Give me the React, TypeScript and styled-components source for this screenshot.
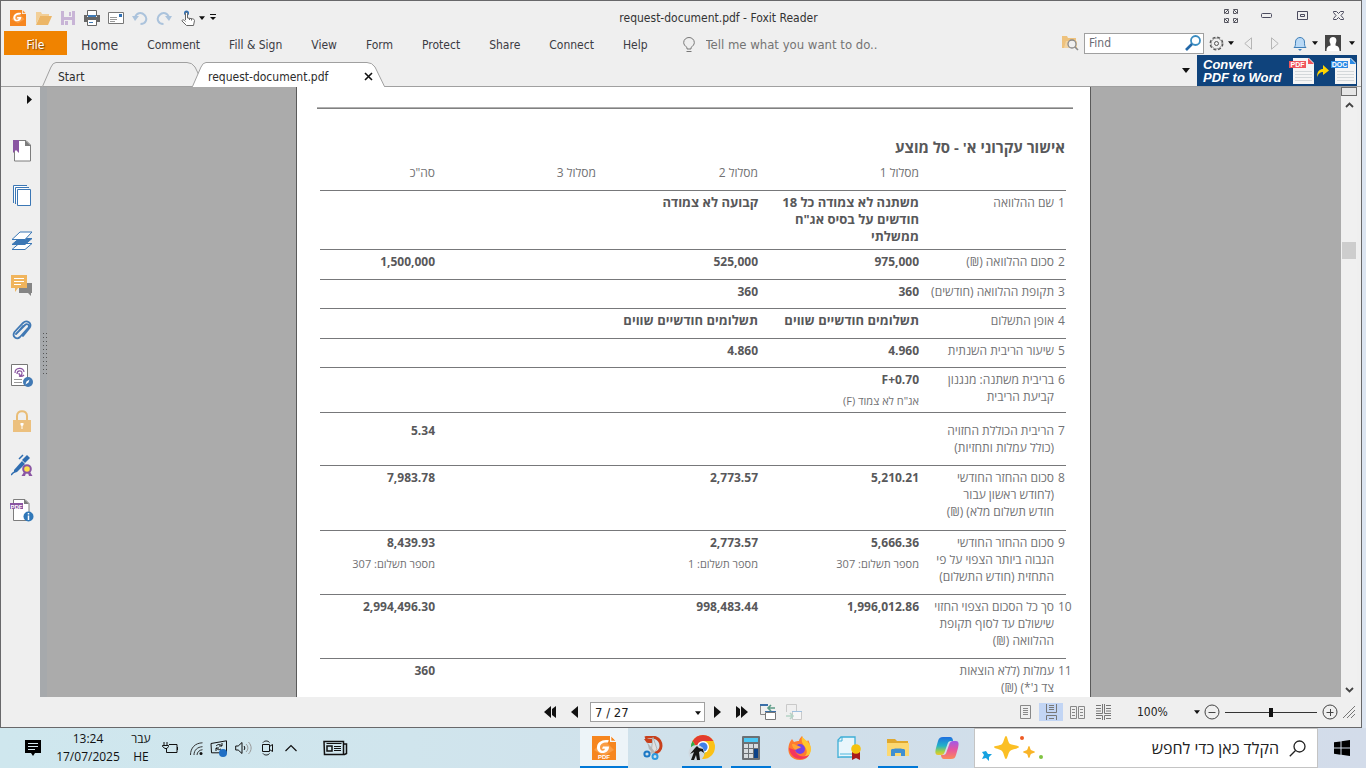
import React from "react";
import styled, { createGlobalStyle, css } from "styled-components";

const uiFont = `"DejaVu Sans Condensed", "Noto Sans", sans-serif`;
const docFont = `"Open Sans", "Noto Sans", "DejaVu Sans", sans-serif`;

const Global = createGlobalStyle`
  * { box-sizing: border-box; }
  html, body { margin: 0; }
  body { font-family: ${uiFont}; font-size: 12px; color: #333; background: #dce5f1; overflow: hidden; }
  button, input, select { font: inherit; color: inherit; }
  svg { display: block; flex: none; }
`;

/* ---------- shell ---------- */
const Desktop = styled.div`
  height: 100vh;
  display: flex;
  flex-direction: column;
`;
const Window = styled.div`
  flex: 1;
  min-height: 0;
  margin-right: 4px;
  display: flex;
  flex-direction: column;
  background: #efefef;
  border: 1px solid #68686a;
`;
const IconButton = styled.button<{ $w?: number; $h?: number; $on?: boolean }>`
  width: ${(p) => p.$w ?? 24}px;
  height: ${(p) => p.$h ?? 24}px;
  flex: none;
  padding: 0;
  border: 0;
  background: ${(p) => (p.$on ? "#c2d5f4" : "transparent")};
  display: flex;
  align-items: center;
  justify-content: center;
`;

/* ---------- title bar ---------- */
const TitleBar = styled.header`
  height: 30px;
  flex: none;
  display: flex;
  align-items: center;
  padding: 3px 4px 0 5px;
`;
const QuickTools = styled.div`
  display: flex;
  align-items: center;
  > :first-child { margin-right: 2px; }
`;
const WindowTitle = styled.h1`
  flex: 1;
  margin: 0;
  padding-left: 2px;
  text-align: center;
  font-size: 12px;
  font-weight: 400;
  line-height: 16px;
`;
const WindowButtons = styled.div`
  display: flex;
  padding-bottom: 4px;
`;

/* ---------- ribbon menu ---------- */
const MenuBar = styled.nav`
  height: 24px;
  flex: none;
  display: flex;
  align-items: stretch;
  padding: 0 2px 0 3px;
`;
const FileButton = styled.button`
  width: 63px;
  padding: 3px 0 0;
  border: 0;
  background: #f08300;
  color: #fff;
  text-shadow: 1px 1px 1px #7a4a10;
`;
const MenuItems = styled.div`
  display: flex;
  align-items: center;
  gap: 29px;
  padding: 3px 0 0 14px;
`;
const MenuItem = styled.button<{ $large?: boolean }>`
  padding: 0;
  border: 0;
  background: none;
  color: #3b3b43;
  font-size: ${(p) => (p.$large ? 14 : 12)}px;
  line-height: 16px;
`;
const TellMe = styled.label`
  display: flex;
  align-items: center;
  gap: 11px;
  padding: 3px 0 0 35px;
`;
const TellInput = styled.input`
  width: 190px;
  padding: 0;
  border: 0;
  outline: 0;
  background: none;
  font-size: 13px;
  &::placeholder { color: #747474; opacity: 1; }
`;
const MenuRight = styled.div`
  margin-left: auto;
  display: flex;
  align-items: center;
`;
const FindBox = styled.label`
  width: 120px;
  height: 21px;
  margin: 0 3px 0 4px;
  padding: 0 2px 0 4px;
  display: flex;
  align-items: center;
  background: #fff;
  border: 1px solid #a0a0a0;
`;
const FindInput = styled.input`
  flex: 1;
  min-width: 0;
  padding: 0;
  border: 0;
  outline: 0;
  background: none;
  &::placeholder { color: #6c6c74; opacity: 1; }
`;

/* ---------- document tabs ---------- */
const TabBar = styled.div`
  height: 32px;
  flex: none;
  display: flex;
  align-items: flex-end;
  padding: 0 4px 0 41px;
  border-bottom: 1px solid #a0a0a0;
`;
const Tab = styled.div<{ $active?: boolean }>`
  position: relative;
  width: ${(p) => (p.$active ? 193 : 163)}px;
  height: 25px;
  margin: 0 ${(p) => (p.$active ? 0 : -13)}px -1px 0;
  padding: 4px 11px 0 16px;
  z-index: ${(p) => (p.$active ? 1 : 0)};
  display: flex;
  align-items: center;
  justify-content: space-between;
  color: #2c2c2c;
`;
const TabShape = styled.svg`
  position: absolute;
  inset: 0;
  z-index: -1;
`;
const TabLabel = styled.button`
  padding: 0;
  border: 0;
  background: none;
  line-height: 16px;
`;
const PromoGroup = styled.div`
  margin-left: auto;
  display: flex;
  align-items: center;
`;
const Promo = styled.a`
  width: 160px;
  height: 31px;
  padding-left: 6px;
  display: flex;
  align-items: center;
  justify-content: space-between;
  background: #0f437c;
  color: #fff;
  text-decoration: none;
  font: italic bold 13px/13px "Liberation Sans", Arial, sans-serif;
`;
const PromoArt = styled.span`
  display: flex;
  align-items: center;
  gap: 2px;
`;

/* ---------- body ---------- */
const Body = styled.div`
  flex: 1;
  min-height: 0;
  display: flex;
  padding-right: 4px;
`;
const SideBar = styled.aside`
  width: 39px;
  flex: none;
  display: flex;
  flex-direction: column;
  align-items: center;
  padding-left: 3px;
  > :first-child { align-self: flex-end; margin: 0 1px 17px 0; }
`;
const Splitter = styled.div`
  width: 7px;
  flex: none;
  background: #a6a9ac;
  display: flex;
  align-items: center;
  padding: 0 0 76px 3px;
`;
const Canvas = styled.main`
  flex: 1;
  min-width: 0;
  padding-right: 1px;
  overflow: hidden;
  background: #ababab;
  display: flex;
  justify-content: center;
`;
const Scroll = styled.div`
  width: 16px;
  flex: none;
  display: flex;
  flex-direction: column;
  align-items: center;
  background: #f0f0f0;
`;
const SplitHandle = styled.div`
  width: 16px;
  height: 9px;
  background: #e6e6e6;
  border: 1px solid #6a6a6a;
`;
const Thumb = styled.div`
  width: 14px;
  height: 17px;
  margin: 128px 0 auto;
  background: #cdcdcd;
`;
const Page = styled.article`
  width: 795px;
  flex: none;
  padding: 20px 17px 0 20px;
  background: #fff;
  border: solid #5a5a5a;
  border-width: 0 1px;
  font-family: ${docFont};
  color: #58585a;
`;
const PageRule = styled.hr`
  margin: 0;
  height: 2px;
  border: 0;
  border-top: 1px solid #b0b0b0;
  background: #808080;
`;
const Heading = styled.h2`
  margin: 28px 8px 6px 0;
  font-size: 15px;
  line-height: 20px;
  font-weight: 700;
`;
const Table = styled.table`
  width: 746px;
  margin: 0 7px 0 0;
  table-layout: fixed;
  border-collapse: collapse;
  font-size: 12px;
  line-height: 17px;
  thead th { height: 27px; padding-top: 1px; }
`;
const Row = styled.tr<{ $h: number }>`
  height: ${(p) => p.$h}px;
  border-top: 1px solid #77787a;
`;
const cell = css<{ $pad?: boolean }>`
  padding: ${(p) => (p.$pad ? 9 : 3)}px 0 0;
  text-align: right;
  vertical-align: top;
  white-space: nowrap;
`;
const Td = styled.td<{ $pad?: boolean }>`
  ${cell}
  font-weight: 700;
`;
const Th = styled.th<{ $pad?: boolean }>`
  ${cell}
  font-weight: 400;
  color: #717173;
`;
const Num = styled.td<{ $pad?: boolean }>`
  ${cell}
  direction: ltr;
  text-align: left;
  color: #717173;
  padding-left: 4px;
`;
const Line = styled.div<{ $note?: boolean; $words?: boolean }>`
  ${(p) => p.$words && "font-size: 13px;"}
  ${(p) => p.$note && "font-weight: 400; font-size: 11px; color: #717173; padding-top: 4px;"}
`;

/* ---------- status bar ---------- */
const StatusBar = styled.footer`
  height: 30px;
  flex: none;
  display: flex;
  align-items: center;
  padding: 0 5px 0 537px;
`;
const PageSelectWrap = styled.label`
  position: relative;
  width: 115px;
  height: 20px;
  margin-left: 4px;
`;
const PageSelect = styled.select`
  width: 100%;
  height: 100%;
  padding: 0 4px;
  appearance: none;
  background: #fff;
  border: 1px solid #a0a0a0;
  border-radius: 0;
  font-size: 13px;
  color: #1c1c1c;
`;
const SelectCaret = styled.span`
  position: absolute;
  right: 4px;
  top: 9px;
  pointer-events: none;
`;
const StatusRight = styled.div`
  margin-left: auto;
  display: flex;
  align-items: center;
`;
const ZoomLabel = styled.output`
  width: 57px;
  margin-left: 22px;
  font-size: 12px;
  color: #222;
`;
const Range = styled.input`
  appearance: none;
  width: 92px;
  height: 12px;
  margin: 0 1px;
  background: linear-gradient(#333, #333) center / 100% 1px no-repeat;
  &::-webkit-slider-thumb {
    appearance: none;
    width: 4px;
    height: 9px;
    background: #111;
  }
`;

/* ---------- taskbar ---------- */
const TaskBar = styled.footer`
  height: 40px;
  flex: none;
  display: flex;
  align-items: stretch;
  background: linear-gradient(90deg, #cfe7ee, #d0e5ed 30%, #d0dfea 60%, #d3dcea);
  font-family: "Open Sans", "Noto Sans", sans-serif;
  color: #111;
`;
const Tray = styled.div`
  display: flex;
  align-items: center;
  padding-left: 21px;
`;
const TrayText = styled.div<{ $w: number }>`
  width: ${(p) => p.$w}px;
  text-align: center;
  font-size: 12px;
  line-height: 18px;
  white-space: nowrap;
`;
const Apps = styled.div`
  margin-left: auto;
  display: flex;
  gap: 1px;
`;
const AppTile = styled.button<{ $state?: "active" | "open" }>`
  position: relative;
  width: 48px;
  padding: 0;
  border: 0;
  display: flex;
  align-items: center;
  justify-content: center;
  background: ${(p) => (p.$state === "active" ? "#edf4f8" : "transparent")};
  &::after {
    content: "";
    position: absolute;
    bottom: 0;
    left: ${(p) => (p.$state === "active" ? 0 : 4)}px;
    right: ${(p) => (p.$state === "active" ? 0 : 4)}px;
    height: ${(p) => (p.$state ? 2 : 0)}px;
    background: #0078d7;
  }
`;
const Search = styled.label`
  width: 344px;
  margin-left: 3px;
  padding: 0 11px 0 7px;
  display: flex;
  align-items: center;
  gap: 10px;
  background: #fff;
  border: 1px solid #c4c4c4;
`;
const SearchInput = styled.input`
  flex: 1;
  min-width: 0;
  padding: 0;
  border: 0;
  outline: 0;
  font-size: 16px;
  &::placeholder { color: #222; opacity: 1; }
`;

/* ---------- icons ---------- */
type IconProps = { w: number; h: number; children: React.ReactNode };
const Ico = ({ w, h, children }: IconProps) => (
  <svg width={w} height={h} viewBox={`0 0 ${w} ${h}`} fill="none" aria-hidden="true">
    {children}
  </svg>
);
const Caret = ({ size = 7 }: { size?: number }) => (
  <svg width={size} height={size > 7 ? 5 : 4} viewBox="0 0 8 5" aria-hidden="true">
    <path d="M0 0h8L4 5z" fill="#111" />
  </svg>
);
const FoxitIcon = ({ size, label }: { size: number; label?: boolean }) => (
  <svg width={size} height={size} viewBox="0 0 24 24" aria-hidden="true">
    <path d="M0 0h18v6h6v18H0z" fill="#f6861f" />
    <path d="M19 0l5 5h-5z" fill="#f6861f" stroke="#fff" strokeWidth=".6" />
    <path d="M2 14L12 4l10 10-10 6z" fill="#fa9d45" />
    <path d="M17 4.500C11 3 5 6 5 11.500 5 15 7.500 17 10.500 17c4 0 6.500-2.500 6.500-6.500h-6l-1 2.200h3c-.3 1.200-1.200 2-2.400 2C9 14.700 8 13.500 8 11.500c0-3.500 3.500-5.300 7.500-4.800z" fill="#fff" />
    {label && (
      <text x="12" y="23" fontSize="6" fontWeight="700" fill="#fff" textAnchor="middle" fontFamily="Liberation Sans">PDF</text>
    )}
  </svg>
);
const Icons = {
  open: <Ico w={16} h={14}><path d="M0 13V1h5l1 2h7v2H4z" fill="#f2cf98" /><path d="M0 14L4 5h12l-4 9z" fill="#ecb667" /></Ico>,
  save: <Ico w={14} h={14}><path d="M0 0h14v14H0z" fill="#c8b4d6" /><path d="M3 0h8v6H3zM3 9h8v5H3z" fill="#efefef" /><path d="M8 1h2v4H8zM4 10h3v4H4z" fill="#c8b4d6" /></Ico>,
  print: <Ico w={16} h={16}><path d="M3.500 6V.5h9V6" fill="#fff" stroke="#666" /><path d="M4 5h8v2H4z" fill="#3f7ab5" /><path d="M0 5h3v2h10V5h3v7H0z" fill="#666" /><path d="M3.500 9.500h9v6h-9z" fill="#fff" stroke="#666" /><path d="M5 12.500h4" stroke="#3f7ab5" /></Ico>,
  mail: <Ico w={16} h={12}><path d="M.5.5h15v11H.5z" fill="#fff" stroke="#777" /><path d="M11 2h3v3h-3z" fill="#2f6fb4" /><path d="M2 5.500h7M2 7.500h7M2 9.500h5" stroke="#999" /></Ico>,
  undo: <Ico w={16} h={14}><path d="M3 7C4 2 9 .5 12.500 4s1.500 9-4 9" stroke="#abc3dc" strokeWidth="2" /><path d="M0 5h7l-4 5z" fill="#abc3dc" /></Ico>,
  redo: <Ico w={16} h={14}><path d="M13 7C12 2 7 .5 3.500 4S2 13 7.500 13" stroke="#abc3dc" strokeWidth="2" /><path d="M16 5H9l4 5z" fill="#abc3dc" /></Ico>,
  hand: <Ico w={14} h={16}><circle cx="5.500" cy="3" r="2.500" fill="#2f6fb4" /><path d="M4.500 10V3.500c0-1.500 2-1.500 2 0V8l5 .8c1 .2 2 .7 2 1.700l-1 5h-7L1 11c0-1.500 1.500-2 3.500.5" fill="#fff" stroke="#666" /><path d="M8.500 8.500V10M10.500 9v1.500" stroke="#666" /></Ico>,
  more: <Ico w={6} h={7}><path d="M0 .5h6" stroke="#111" /><path d="M0 3h6L3 6z" fill="#111" /></Ico>,
  full: <Ico w={14} h={14}><path d="M.5.5h4L.5 4.500zM4.500 1.500v3h-3M13.500.5h-4l4 4zM9.500 1.500v3h3M.5 13.500h4l-4-4zM4.500 12.500v-3h-3M13.500 13.500h-4l4-4zM9.500 12.500v-3h3" stroke="#55555f" /></Ico>,
  min: <Ico w={12} h={6}><rect x=".5" y=".5" width="10" height="4" rx="1" stroke="#4b4b5e" /></Ico>,
  max: <Ico w={12} h={10}><path d="M.5.5h10v8H.5zM3.500 3.500h4v2h-4z" stroke="#4b4b5e" /></Ico>,
  close: <Ico w={12} h={10}><path d="M.5.5h3l2 2 2-2h3v1L8 4.500l2.500 3v1h-3l-2-2-2 2h-3v-1L3 4.500l-2.500-3z" stroke="#4b4b5e" /></Ico>,
  bulb: <Ico w={12} h={16}><path d="M4 12v-1.500C2 9 .7 7.500.7 5.500a5.300 5 0 0 1 10.600 0c0 2-1.300 3.500-3.300 5V12zM3.500 14.500h5" stroke="#777" /></Ico>,
  folderFind: <Ico w={17} h={16}><path d="M0 1h5l1 2h8v10H0z" fill="#eec27d" /><path d="M2 13l2-7h11v7z" fill="#f3d4a2" /><circle cx="10" cy="9" r="4" fill="#efefef" stroke="#8a8a8a" strokeWidth="1.300" /><path d="M13 12l3 3" stroke="#8a8a8a" strokeWidth="1.600" /></Ico>,
  find: <Ico w={16} h={16}><circle cx="10.500" cy="5.500" r="4.500" stroke="#3a8cc0" strokeWidth="1.800" /><path d="M7 9l-6 6" stroke="#2368a8" strokeWidth="2.600" /></Ico>,
  gear: <Ico w={15} h={15}><circle cx="7.500" cy="7.500" r="6.300" stroke="#555" strokeDasharray="3 1.950" strokeWidth="1.300" /><circle cx="7.500" cy="7.500" r="5.400" stroke="#777" strokeWidth=".7" /><circle cx="7.500" cy="7.500" r="2" stroke="#555" /></Ico>,
  triL: <Ico w={8} h={13}><path d="M7.500.8v11.400L.8 6.500z" stroke="#b5b5b5" /></Ico>,
  triR: <Ico w={8} h={13}><path d="M.5.8v11.400l6.700-5.700z" stroke="#b5b5b5" /></Ico>,
  bell: <Ico w={14} h={15}><path d="M1 11.500c1.500-1 1.500-3 1.500-5.500 0-6 9-6 9 0 0 2.500 0 4.500 1.500 5.500z" fill="#b9d9f6" stroke="#3f7fb8" /><path d="M5 13h4l-2 2z" fill="#3f7fb8" /></Ico>,
  user: <Ico w={16} h={16}><path d="M0 0h16v16H0z" fill="#454545" /><path d="M8 2c4 0 4 4 2.500 7v1.500c2 .5 4 1 4 5.500h-13c0-4.500 2-5 4-5.500V9C4 6 4 2 8 2z" fill="#fff" /></Ico>,
  tabClose: <Ico w={9} h={9}><path d="M1 1l7 7M8 1L1 8" stroke="#111" strokeWidth="1.600" /></Ico>,
};
const FileBadge = ({ color, text }: { color: string; text: string }) => (
  <svg width="26" height="28" viewBox="0 0 26 28" aria-hidden="true">
    <path d="M4 1h16l5 5v21H4z" fill="#f5f5f5" />
    <path d="M19 1l6 6h-6z" fill={color} />
    <path d="M6 14.500h17M6 17.500h17M6 20.500h17M6 23.500h17" stroke="#d4d8da" />
    <path d="M0 4h17v7H0z" fill={color} />
    <text x="8.500" y="10" fontSize="7" fontWeight="700" fontStyle="normal" fill="#fff" textAnchor="middle" fontFamily="Liberation Sans">{text}</text>
  </svg>
);

const sideIcons: [string, React.ReactNode][] = [
  ["Bookmarks", <Ico w={18} h={22}><path d="M1.500.5H13l4.500 4.500v16h-16z" fill="#fff" stroke="#7d7d7d" /><path d="M12 0l6 6h-6z" fill="#7d7d7d" /><path d="M0 0h6v13l-3-3-3 3z" fill="#8a55a2" /></Ico>],
  ["Pages", <Ico w={18} h={21}><g stroke="#3b77b5" fill="#fff"><path d="M.5 18V.5H14" /><path d="M2.500 19V2.500H16" /><path d="M4.500 4.500h13v16h-13z" /></g></Ico>],
  ["Layers", <Ico w={22} h={20}><path d="M1 18.500l7-6h13l-7 6z" fill="#fff" stroke="#3b77b5" /><path d="M1 13.500l7-6h13l-7 6z" fill="#3b77b5" stroke="#3b77b5" /><path d="M1 8.500l8-7.500h12l-7 7.500z" fill="#fff" stroke="#3b77b5" /></Ico>],
  ["Comments", <Ico w={22} h={21}><path d="M8 8h13v10h-1v3l-3-3H8z" fill="#858585" /><path d="M0 0h16v13H7l-3 4v-4H0z" fill="#f0b45c" /><path d="M3 3.500h10M3 6.500h10M3 9.500h7" stroke="#fff" /></Ico>],
  ["Attachments", <Ico w={20} h={22}><path d="M4 14l9-9c2-2 5 0 3.500 2.500L8 17c-3 3-8.500 0-5.500-5L11 3c3.500-3.500 10 0 6.500 5L11 16M6 12l5-6" stroke="#4179b4" strokeWidth="1.800" strokeLinecap="round" /></Ico>],
  ["Signatures", <Ico w={22} h={23}><path d="M.5.5h16v21H.5z" fill="#fff" stroke="#777" /><path d="M4 9c0-6 9-6 9-1M6 10c0-4 5-4 5-1s-3 3-3 0M8 12c2 1 4 0 5-1" stroke="#8a55a2" strokeWidth="1.200" /><path d="M3 15.500h8M3 18.500h8" stroke="#999" /><circle cx="17" cy="18" r="5" fill="#4179b4" /><path d="M14.500 20.500l1-3 3-2-1 3z" fill="#fff" /></Ico>],
  ["Security", <Ico w={18} h={22}><path d="M4 10V6c0-6.500 10-6.500 10 0v4" stroke="#e9bd77" strokeWidth="2" /><path d="M0 10h18v12H0z" fill="#ecc07e" /><path d="M7.500 13h3v2l-1 1v3h-1v-3l-1-1z" fill="#fff" /></Ico>],
  ["Digital signatures", <Ico w={22} h={23}><path d="M3 16l8-9 3 3-8 8-3 1z" fill="#2f6db0" /><path d="M11 6l5-5 3 3-5 5z" fill="#2f6db0" /><path d="M0 21l3-3M8 5l4-4" stroke="#2f6db0" strokeWidth="1.500" /><circle cx="16" cy="15" r="3.800" fill="#ffe14d" stroke="#8a55a2" strokeWidth="2" /><path d="M13 18l-2.500 4H14l1-3zM19 18l2.500 4H18l-1-3z" fill="#8a55a2" /></Ico>],
  ["Document info", <Ico w={24} h={23}><path d="M3.500.5H15l4 4v17H3.500z" fill="#fff" stroke="#7d7d7d" /><path d="M14 0l5 5h-5z" fill="#7d7d7d" /><path d="M0 4h13v6H0z" fill="#8a55a2" /><text x="6.500" y="9.500" fontSize="6" fontWeight="700" fill="#fff" textAnchor="middle" fontFamily="Liberation Sans">PDF</text><circle cx="18.500" cy="17.500" r="5" fill="#2f77b8" /><path d="M18.500 14v1.500M18.500 16.500V21" stroke="#fff" strokeWidth="1.500" /></Ico>],
];

const appIcons: [string, "active" | "open" | undefined, React.ReactNode][] = [
  ["Foxit Reader", "active", <FoxitIcon size={24} label />],
  ["Snipping Tool", undefined, <Ico w={20} h={24}><path d="M2 2c8-3 16 0 16 8 0 4-3 7-7 7" stroke="#c8401c" strokeWidth="3" /><path d="M1 3h8v4H4z" fill="#c8401c" /><path d="M8 17L10 1l4 12-3 4z" fill="#e1e1e1" stroke="#999" strokeWidth=".6" /><path d="M12 16L4 6l2 7 4 4z" fill="#b4b4b4" /><circle cx="4" cy="18" r="2.600" stroke="#1c78c4" strokeWidth="2" /><circle cx="12" cy="20.500" r="2.500" stroke="#2d9ae0" strokeWidth="2" /></Ico>],
  ["Chrome", "open", <Ico w={28} h={28}><circle cx="15" cy="13" r="12" fill="#fbc116" /><path d="M4.600 7a12 12 0 0 1 20.800 0H15l-5 8z" fill="#e33b2e" /><path d="M4.600 7a12 12 0 0 0 9 18l5-9H10z" fill="#2da94f" /><circle cx="15" cy="13" r="6" fill="#fff" /><circle cx="15" cy="13" r="4.600" fill="#3f7fe8" /><circle cx="8.500" cy="19" r="8" fill="#cfd8df" /><path d="M2 20l5-6 2-2 2 2 4 1 1 4-3-2-2 1 1 8H9l-1-5-2 5H3l3-8z" fill="#151515" /></Ico>],
  ["Calculator", "open", <Ico w={18} h={24}><rect width="18" height="24" rx="1" fill="#6b7074" /><path d="M2 2h14v4H2z" fill="#4cc8f4" /><path d="M2 8h4v4H2zM7 8h4v4H7zM12 8h4v4h-4zM2 13h4v4H2zM7 13h4v4H7zM2 18h4v4H2zM7 18h4v4H7z" fill="#d7dcdf" /><path d="M12 13h4v9h-4z" fill="#0c4288" /></Ico>],
  ["Firefox", undefined, <Ico w={24} h={24}><path d="M2 6l2-3 2 3c2-1 4-1 5-1 0-2 2-4 3-5 1 3 3 4 5 6l1-2c4 6 4 20-8 20C-1 24-1 12 2 6z" fill="#ff7a2f" /><path d="M14 0c1 4 9 5 9 13 0 6-5 10-10 10 8-4 6-9 4-12-3-3-4-7-3-11z" fill="#ffc62e" /><path d="M1 12c1 8 7 11 12 11 4 0 7-2 8-4-6 3-13 1-14-5z" fill="#f5365e" /><circle cx="12" cy="13" r="5" fill="#7542e5" /><path d="M4 8c4 0 5 2 9 3-1 2-4 1-5 3-2-1-4-3-4-6z" fill="#ffa436" /></Ico>],
  ["Certificates", undefined, <Ico w={24} h={24}><path d="M1 21V4l3-3h14v20H4c-2 0-3 0-3 1z" fill="#e8f6fc" stroke="#3eaed6" strokeWidth="1.300" /><path d="M1 5h4V1" stroke="#3eaed6" /><path d="M3 18h12" stroke="#9ad6ec" strokeWidth="2" /><path d="M15 16h8v8l-4-2-4 2z" fill="#a81c1c" /><circle cx="19" cy="13" r="4.800" fill="#f4c20f" /></Ico>],
  ["File Explorer", "open", <Ico w={22} h={20}><path d="M0 1h8l2 2h11v15H0z" fill="#e0a82e" /><path d="M0 5h22v13H0z" fill="#fcd871" /><path d="M4 18v-6c0-2 14-2 14 0v6h-4v-3H8v3z" fill="#3f8fd2" /></Ico>],
  ["Copilot", undefined, (
    <Ico w={24} h={22}>
      <defs>
        <linearGradient id="cpA" x1="0" y1="0" x2="0" y2="1"><stop offset="0" stopColor="#1f6fe0" /><stop offset=".5" stopColor="#23b3c8" /><stop offset=".8" stopColor="#a5cf45" /><stop offset="1" stopColor="#f2c62c" /></linearGradient>
        <linearGradient id="cpB" x1="0" y1="0" x2="0" y2="1"><stop offset="0" stopColor="#a05ae8" /><stop offset=".5" stopColor="#e8569c" /><stop offset="1" stopColor="#fb8a58" /></linearGradient>
      </defs>
      <path d="M8 0h7c2 0 3 2 3 4h-2c-2 0-3 1-3.500 3L10 14c-1 3-2 4-4 4H3c-3 0-3-3-2-7l2-7c1-3 2-4 5-4z" fill="url(#cpA)" />
      <path d="M16 22H9c-2 0-3-2-3-4h2c2 0 3-1 3.500-3L14 8c1-3 2-4 4-4h3c3 0 3 3 2 7l-2 7c-1 3-2 4-5 4z" fill="url(#cpB)" />
    </Ico>
  )],
];

/* ---------- data ---------- */
type Cell = { v?: string[]; note?: string; words?: boolean };
type LoanRow = { h: number; label: string[]; cells: Cell[]; pad?: boolean };
const rows: LoanRow[] = [
  { h: 59, label: ["שם ההלוואה"], cells: [{ words: true, v: ["משתנה לא צמודה כל 18", "חודשים על בסיס אג\"ח", "ממשלתי"] }, { words: true, v: ["קבועה לא צמודה"] }, {}, {}] },
  { h: 30, label: ["סכום ההלוואה (₪)"], cells: [{ v: ["975,000"] }, { v: ["525,000"] }, {}, { v: ["1,500,000"] }] },
  { h: 29, label: ["תקופת ההלוואה (חודשים)"], cells: [{ v: ["360"] }, { v: ["360"] }, {}, {}] },
  { h: 30, label: ["אופן התשלום"], cells: [{ words: true, v: ["תשלומים חודשיים שווים"] }, { words: true, v: ["תשלומים חודשיים שווים"] }, {}, {}] },
  { h: 29, label: ["שיעור הריבית השנתית"], cells: [{ v: ["4.960"] }, { v: ["4.860"] }, {}, {}] },
  { h: 45, label: ["בריבית משתנה: מנגנון", "קביעת הריבית"], cells: [{ v: ["F+0.70"], note: "אג\"ח לא צמוד (F)" }, {}, {}, {}] },
  { h: 53, pad: true, label: ["הריבית הכוללת החזויה", "(כולל עמלות ותחזיות)"], cells: [{}, {}, {}, { v: ["5.34"] }] },
  { h: 65, label: ["סכום ההחזר החודשי", "(לחודש ראשון עבור", "חודש תשלום מלא) (₪)"], cells: [{ v: ["5,210.21"] }, { v: ["2,773.57"] }, {}, { v: ["7,983.78"] }] },
  { h: 64, label: ["סכום ההחזר החודשי", "הגבוה ביותר הצפוי על פי", "התחזית (חודש התשלום)"], cells: [{ v: ["5,666.36"], note: "מספר תשלום: 307" }, { v: ["2,773.57"], note: "מספר תשלום: 1" }, {}, { v: ["8,439.93"], note: "מספר תשלום: 307" }] },
  { h: 64, label: ["סך כל הסכום הצפוי החזוי", "שישולם עד לסוף תקופת", "ההלוואה (₪)"], cells: [{ v: ["1,996,012.86"] }, { v: ["998,483.44"] }, {}, { v: ["2,994,496.30"] }] },
  { h: 60, label: ["עמלות (ללא הוצאות", "צד ג'*) (₪)"], cells: [{}, {}, {}, { v: ["360"] }] },
];
const columns = [12, 135, 161, 162, 161, 115];
const heads = ["מסלול 1", "מסלול 2", "מסלול 3", "סה\"כ"];
const menus = ["Home", "Comment", "Fill & Sign", "View", "Form", "Protect", "Share", "Connect", "Help"];

const LoanTable = () => (
  <Table>
    <colgroup>{columns.map((w, i) => <col key={i} width={w} />)}</colgroup>
    <thead>
      <tr>
        <Td /><Td />
        {heads.map((h) => <Th key={h} scope="col">{h}</Th>)}
      </tr>
    </thead>
    <tbody>
      {rows.map((r, i) => (
        <Row key={i} $h={r.h}>
          <Num $pad={r.pad}>{i + 1}</Num>
          <Th scope="row" $pad={r.pad}>{r.label.map((l) => <Line key={l}>{l}</Line>)}</Th>
          {r.cells.map((c, j) => (
            <Td key={j} $pad={r.pad}>
              {c.v?.map((l) => <Line key={l} $words={c.words}>{l}</Line>)}
              {c.note && <Line $note>{c.note}</Line>}
            </Td>
          ))}
        </Row>
      ))}
    </tbody>
  </Table>
);

const TabOutline = ({ w, fill }: { w: number; fill: string }) => (
  <TabShape width={w} height="25" viewBox={`0 0 ${w} 25`} aria-hidden="true">
    <path d={`M.5 24.500L9 5Q11 .5 14 .5H${w - 18}Q${w - 13} .5 ${w - 10} 5L${w - 0.5} 24.500`} fill={fill} stroke="#a0a0a0" />
    <path d={`M1 24.500H${w - 1}`} stroke={fill === "#fff" ? "#fff" : "#a0a0a0"} />
  </TabShape>
);

const grip = Array.from({ length: 11 }, (_, i) => i * 4);

export default function App() {
  return (
    <Desktop>
      <Global />
      <Window>
        <TitleBar>
          <QuickTools>
            <IconButton aria-label="Foxit"><FoxitIcon size={16} /></IconButton>
            <IconButton aria-label="Open">{Icons.open}</IconButton>
            <IconButton aria-label="Save">{Icons.save}</IconButton>
            <IconButton aria-label="Print">{Icons.print}</IconButton>
            <IconButton aria-label="Mail">{Icons.mail}</IconButton>
            <IconButton aria-label="Undo">{Icons.undo}</IconButton>
            <IconButton aria-label="Redo">{Icons.redo}</IconButton>
            <IconButton aria-label="Hand">{Icons.hand}</IconButton>
            <IconButton $w={4} aria-label="Hand options"><Caret size={6} /></IconButton>
            <IconButton $w={18} aria-label="Customize">{Icons.more}</IconButton>
          </QuickTools>
          <WindowTitle>request-document.pdf - Foxit Reader</WindowTitle>
          <WindowButtons>
            <IconButton $w={36} aria-label="Full screen">{Icons.full}</IconButton>
            <IconButton $w={36} aria-label="Minimize">{Icons.min}</IconButton>
            <IconButton $w={36} aria-label="Maximize">{Icons.max}</IconButton>
            <IconButton $w={36} aria-label="Close">{Icons.close}</IconButton>
          </WindowButtons>
        </TitleBar>

        <MenuBar>
          <FileButton>File</FileButton>
          <MenuItems>
            {menus.map((m, i) => <MenuItem key={m} $large={i === 0}>{m}</MenuItem>)}
          </MenuItems>
          <TellMe>
            {Icons.bulb}
            <TellInput aria-label="Tell me" placeholder="Tell me what you want to do.." />
          </TellMe>
          <MenuRight>
            <IconButton $w={20} aria-label="Search folder">{Icons.folderFind}</IconButton>
            <FindBox>
              <FindInput aria-label="Find" placeholder="Find" />
              {Icons.find}
            </FindBox>
            <IconButton $w={18} aria-label="Settings">{Icons.gear}</IconButton>
            <IconButton $w={12} aria-label="Settings options"><Caret size={6} /></IconButton>
            <IconButton $w={22} aria-label="Previous">{Icons.triL}</IconButton>
            <IconButton $w={32} aria-label="Next">{Icons.triR}</IconButton>
            <IconButton $w={18} aria-label="Notifications">{Icons.bell}</IconButton>
            <IconButton $w={12} aria-label="Notification options"><Caret size={6} /></IconButton>
            <IconButton $w={24} aria-label="Account">{Icons.user}</IconButton>
            <IconButton $w={14} aria-label="Account options"><Caret size={6} /></IconButton>
          </MenuRight>
        </MenuBar>

        <TabBar>
          <Tab>
            <TabOutline w={163} fill="#efefef" />
            <TabLabel>Start</TabLabel>
          </Tab>
          <Tab $active>
            <TabOutline w={193} fill="#fff" />
            <TabLabel>request-document.pdf</TabLabel>
            <IconButton $w={12} $h={12} aria-label="Close tab">{Icons.tabClose}</IconButton>
          </Tab>
          <PromoGroup>
            <IconButton $w={22} aria-label="Tab list"><Caret size={10} /></IconButton>
            <Promo href="#convert">
              <span>Convert<br />PDF to Word</span>
              <PromoArt>
                <FileBadge color="#f0565c" text="PDF" />
                <Ico w={12} h={12}><path d="M0 12c0-6 3-8 6-8V0l6 5.500L6 10V7C3 7 1 9 0 12z" fill="#ffd500" /></Ico>
                <FileBadge color="#2b8be6" text="DOC" />
              </PromoArt>
            </Promo>
          </PromoGroup>
        </TabBar>

        <Body>
          <SideBar>
            <IconButton $w={20} $h={24} aria-label="Expand panel">
              <Ico w={5} h={9}><path d="M0 0l5 4.500L0 9z" fill="#111" /></Ico>
            </IconButton>
            {sideIcons.map(([name, icon]) => (
              <IconButton key={name} $w={36} $h={45} aria-label={name}>{icon}</IconButton>
            ))}
          </SideBar>
          <Splitter>
            <Ico w={4} h={43}>
              {grip.map((y) => <path key={y} d={`M0 ${y + 0.5}h1M3 ${y + 0.5}h1`} stroke="#555" />)}
            </Ico>
          </Splitter>
          <Canvas>
            <Page dir="rtl" lang="he">
              <PageRule />
              <Heading>אישור עקרוני א' - סל מוצע</Heading>
              <LoanTable />
            </Page>
          </Canvas>
          <Scroll>
            <SplitHandle />
            <IconButton $w={16} $h={18} aria-label="Scroll up"><Ico w={9} h={6}><path d="M1 5l3.500-3.500L8 5" stroke="#444" strokeWidth="1.800" /></Ico></IconButton>
            <Thumb />
            <IconButton $w={16} $h={14} aria-label="Scroll down"><Ico w={9} h={6}><path d="M1 1l3.500 3.500L8 1" stroke="#444" strokeWidth="1.800" /></Ico></IconButton>
          </Scroll>
        </Body>

        <StatusBar>
          <IconButton aria-label="First page"><Ico w={12} h={12}><path d="M7 0v12L0 6zM12 0v12L8 9V3z" fill="#111" /></Ico></IconButton>
          <IconButton aria-label="Previous page"><Ico w={7} h={12}><path d="M7 0v12L0 6z" fill="#111" /></Ico></IconButton>
          <PageSelectWrap>
            <PageSelect aria-label="Page"><option>7 / 27</option></PageSelect>
            <SelectCaret><Caret size={6} /></SelectCaret>
          </PageSelectWrap>
          <IconButton aria-label="Next page"><Ico w={7} h={12}><path d="M0 0v12l7-6z" fill="#111" /></Ico></IconButton>
          <IconButton $w={26} aria-label="Last page"><Ico w={12} h={12}><path d="M0 0v12l4-3V3zM5 0v12l7-6z" fill="#111" /></Ico></IconButton>
          <IconButton $w={26} aria-label="Previous view"><Ico w={16} h={16}><path d="M5 10.500H.5V.5" stroke="#888" /><path d="M0 1h8" stroke="#3b6fa8" strokeWidth="2" /><path d="M5.500 8.500h10v7h-10z" fill="#fff" stroke="#777" /><path d="M5 7.500h11" stroke="#3b6fa8" /><path d="M15 4H9M11 1L8 4l3 3" stroke="#5c9c86" strokeWidth="1.600" /></Ico></IconButton>
          <IconButton $w={26} aria-label="Next view"><Ico w={16} h={16}><path d="M.5 8V.5h10V7" stroke="#c9c9c9" /><path d="M6.500 7.500h9v8h-9z" fill="#f6f6f6" stroke="#c9c9c9" /><path d="M6 7.500h10" stroke="#9fc0df" /><path d="M0 12h6M4 9l3 3-3 3" stroke="#b5d3c6" strokeWidth="1.600" /></Ico></IconButton>
          <StatusRight>
            <IconButton $w={28} $h={18} aria-label="Single page"><Ico w={11} h={14}><path d="M.5.5h10v13H.5zM3 3.500h5M3 5.500h5M3 7.500h5M3 9.500h5" stroke="#888" /></Ico></IconButton>
            <IconButton $h={18} $on aria-label="Continuous"><Ico w={11} h={16}><path d="M.5 0v8.500h10V0M.5 16v-4.500h10V16M3 1.500h5M3 3.500h5M3 5.500h5M3 14.500h5" stroke="#777" /></Ico></IconButton>
            <IconButton $w={28} $h={18} aria-label="Facing"><Ico w={15} h={13}><path d="M.5.500h6v12h-6zM8.500.500h6v12h-6zM2 3.500h3M2 6.500h3M2 9.500h3M10 3.500h3M10 6.500h3M10 9.500h3" stroke="#888" /></Ico></IconButton>
            <IconButton $h={18} aria-label="Continuous facing"><Ico w={15} h={16}><path d="M6.500 0v9.500H0M8.500 0v9.500H15M6.500 16v-4.500H0M8.500 16v-4.500H15M0 1.500h5M0 4.500h5M0 7h5M10 1.500h5M10 4.500h5M10 7h5M0 14.500h5M10 14.500h5" stroke="#777" /></Ico></IconButton>
            <ZoomLabel>100%</ZoomLabel>
            <IconButton $w={6} aria-label="Zoom presets"><Caret size={6} /></IconButton>
            <IconButton aria-label="Zoom out"><Ico w={16} h={16}><circle cx="8" cy="8" r="7" stroke="#444" /><path d="M4.500 8.500h7" stroke="#444" /></Ico></IconButton>
            <Range type="range" min={0} max={100} defaultValue={50} aria-label="Zoom" />
            <IconButton aria-label="Zoom in"><Ico w={16} h={16}><circle cx="8" cy="8" r="7" stroke="#444" /><path d="M4.500 8.500h7M8.500 5v7" stroke="#444" /></Ico></IconButton>
            <Ico w={14} h={14}><path d="M1 13L13 1M5 13l8-8M9 13l4-4" stroke="#777" /></Ico>
          </StatusRight>
        </StatusBar>
      </Window>

      <TaskBar>
        <Tray>
          <IconButton aria-label="Action center"><Ico w={16} h={16}><path d="M0 0h16v13h-6l-2 3-2-3H0z" fill="#000" /><path d="M3 3.500h10M3 6.500h10M3 9.500h7" stroke="#d5e8ef" /></Ico></IconButton>
          <TrayText $w={86}>13:24<br />17/07/2025</TrayText>
          <TrayText $w={20}>עבר<br />HE</TrayText>
          <IconButton $w={38} aria-label="Power"><Ico w={17} h={12}><path d="M7 2.500h8v8H4.500V6M15.500 5v3M2 0v3M5 0v3M.5 3.500h6v1l-1.500 2h-2L.5 4.500z" stroke="#111" /></Ico></IconButton>
          <IconButton $w={14} aria-label="Network"><Ico w={13} h={13}><path d="M.5 13C.5 6 5 1 12.500.8M4 13c0-5 3.500-8 8.500-8.300M7 13c0-3 2.500-5 5.500-5.300" stroke="#333" /><circle cx="11" cy="11.500" r="1.500" fill="#111" /></Ico></IconButton>
          <IconButton $w={32} aria-label="Updates"><Ico w={18} h={17}><path d="M1 3.500L16.500.8v12H1.500z" stroke="#111" /><path d="M6 6c2-2 4-2 6 0M12 3v3H9M11 9c-2 1-3 1-5-1M6 11V8h3" stroke="#111" /><circle cx="13" cy="13" r="4" fill="#1f6fc4" /></Ico></IconButton>
          <IconButton $w={16} aria-label="Volume"><Ico w={17} h={14}><path d="M.7 5h2.500L7 1.500v11L3.200 9H.7z" stroke="#111" /><path d="M9 5c1 1 1 3 0 4" stroke="#111" /><path d="M11 3c2.500 2.500 2.500 5.500 0 8M13.500 1c3.500 4 3.500 8 0 12" stroke="#999" /></Ico></IconButton>
          <IconButton $w={32} aria-label="Camera"><Ico w={12} h={16}><path d="M1.500 4.500h7v7h-7zM8.500 6.500l3-2v7l-3-2M2 2.500C3.500.5 7 .5 8.500 2.500M2 13.500c1.500 2 5 2 6.500 0" stroke="#111" /></Ico></IconButton>
          <IconButton $w={16} aria-label="Hidden icons"><Ico w={12} h={8}><path d="M.5 7L6 1.500 11.500 7" stroke="#111" strokeWidth="1.200" /></Ico></IconButton>
          <IconButton $w={72} aria-label="News"><Ico w={25} h={16}><path d="M1 1.500h19.500v13H1.500zM20.500 4h3v9.500l-2 1h-3" stroke="#111" strokeWidth="1.500" /><path d="M4 6h5v5H4z" stroke="#111" strokeWidth="1.500" /><path d="M3.500 3.500h15M11 6.500h7M11 8.500h7M11 10.500h7" stroke="#111" /></Ico></IconButton>
        </Tray>
        <Apps>
          {appIcons.map(([name, state, icon]) => (
            <AppTile key={name} $state={state} aria-label={name}>{icon}</AppTile>
          ))}
        </Apps>
        <Search dir="ltr">
          <Ico w={62} h={28}>
            <path d="M24 2c1.500 0 2 7 4 8s9 1.500 9 3-7 2-9 4-2.500 8-4 8-2-6-4-8-8-2.500-8-4 6-1 8-3 2.500-8 4-8z" fill="#fbbf24" />
            <path d="M47 12c1 0 1 3 2 4s4 1 4 2-3 1-4 2-1 4-2 4-1-3-2-4-4-1-4-2 3-1 4-2 1-4 2-4z" fill="#f9b428" />
            <path d="M4 17l2 3h4l-3 3 0 4-3-3-4 1 2-4-2-3z" fill="#17a2e0" />
            <circle cx="40" cy="4" r="2" fill="#ee5a24" /><circle cx="59" cy="23" r="2" fill="#80c342" />
          </Ico>
          <SearchInput dir="rtl" aria-label="חיפוש" placeholder="הקלד כאן כדי לחפש" />
          <Ico w={17} h={17}><circle cx="10.500" cy="6.500" r="5.500" stroke="#222" strokeWidth="1.300" /><path d="M6.500 10.500L.8 16.200" stroke="#222" strokeWidth="1.300" /></Ico>
        </Search>
        <IconButton $w={48} $h={40} aria-label="Start">
          <Ico w={16} h={16}><path d="M0 2.300L6.500 1.400v6.100H0zM7.500 1.200L16 0v7.500H7.500zM0 8.500h6.500v6.200L0 13.800zM7.500 8.500H16V16l-8.500-1.200z" fill="#000" /></Ico>
        </IconButton>
      </TaskBar>
    </Desktop>
  );
}
